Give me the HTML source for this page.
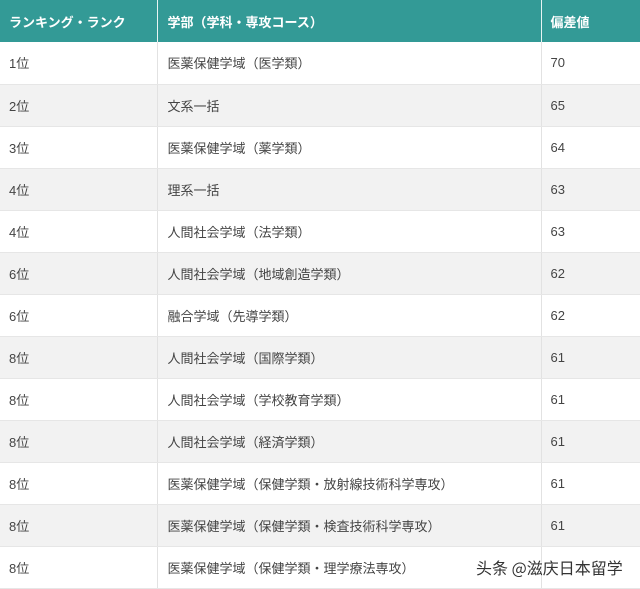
<!DOCTYPE html>
<html><head><meta charset="utf-8"><style>
*{margin:0;padding:0;box-sizing:border-box}
body{width:640px;height:588px;overflow:hidden;background:#fff;font-family:"Liberation Sans","Noto Sans CJK JP",sans-serif;position:relative}
table{border-collapse:collapse;width:640px;table-layout:fixed}
td,th{font-size:13px;text-align:left;padding:0 0 0 9px;height:42px;color:#444;border-right:1px solid #e2e2e2;border-bottom:1px solid #e6e6e6}
th{background:#339a96;color:#fff;font-weight:bold;height:42px;border-right:1px solid #e8f4f3;border-bottom:none}
td:last-child,th:last-child{border-right:none}
tr:nth-child(odd) td{background:#f2f2f2}
td:nth-child(2),th:nth-child(2){padding-left:10px}
.wm{position:absolute;left:476px;top:555px;font-size:16px;color:#333;text-shadow:0 0 2px #fff,0 0 2px #fff;font-family:"Noto Sans CJK SC",sans-serif}
</style></head><body>
<table>
<colgroup><col style="width:157px"><col style="width:384px"><col style="width:99px"></colgroup>
<tr><th>ランキング・ランク</th><th>学部（学科・専攻コース）</th><th>偏差値</th></tr>
<tr><td>1位</td><td>医薬保健学域（医学類）</td><td>70</td></tr>
<tr><td>2位</td><td>文系一括</td><td>65</td></tr>
<tr><td>3位</td><td>医薬保健学域（薬学類）</td><td>64</td></tr>
<tr><td>4位</td><td>理系一括</td><td>63</td></tr>
<tr><td>4位</td><td>人間社会学域（法学類）</td><td>63</td></tr>
<tr><td>6位</td><td>人間社会学域（地域創造学類）</td><td>62</td></tr>
<tr><td>6位</td><td>融合学域（先導学類）</td><td>62</td></tr>
<tr><td>8位</td><td>人間社会学域（国際学類）</td><td>61</td></tr>
<tr><td>8位</td><td>人間社会学域（学校教育学類）</td><td>61</td></tr>
<tr><td>8位</td><td>人間社会学域（経済学類）</td><td>61</td></tr>
<tr><td>8位</td><td>医薬保健学域（保健学類・放射線技術科学専攻）</td><td>61</td></tr>
<tr><td>8位</td><td>医薬保健学域（保健学類・検査技術科学専攻）</td><td>61</td></tr>
<tr><td>8位</td><td>医薬保健学域（保健学類・理学療法専攻）</td><td></td></tr>
</table>
<div class="wm">头条 @滋庆日本留学</div>
</body></html>
